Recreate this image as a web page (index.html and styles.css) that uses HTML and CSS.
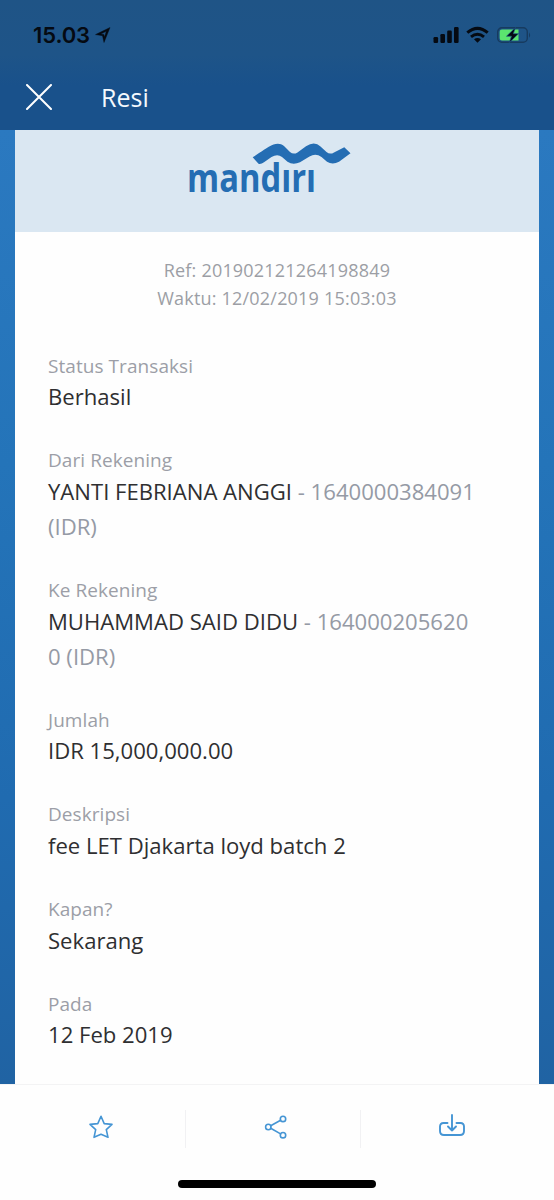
FILE: index.html
```html
<!DOCTYPE html>
<html lang="id">
<head>
<meta charset="utf-8">
<title>Resi</title>
<link rel="stylesheet" href="styles.css">
</head>
<body>
<header class="header">
  <div class="status">
    <span class="clock">15.03</span>
    <svg class="loc" width="16" height="16" viewBox="0 0 16 16"><path d="M15 .5.5 7.600 7.500 8.700 9 15.500zM11.300 4.300 5.800 7.100 8.900 7.500 9.500 10z" fill="#050a12" stroke="#050a12" stroke-width=".4" fill-rule="evenodd"/></svg>
    <svg class="indicators" width="98" height="18" viewBox="0 0 98 18">
      <g fill="#050a12">
        <rect x="0.500" y="11" width="4.600" height="6" rx="1.200"/>
        <rect x="7.400" y="8" width="4.600" height="9" rx="1.200"/>
        <rect x="14.200" y="4.500" width="4.600" height="12.500" rx="1.200"/>
        <rect x="21" y="1" width="4.600" height="16" rx="1.200"/>
        <path d="M41 13.200q3.500-2.300 7 0L44.500 16.800z"/>
      </g>
      <g fill="none" stroke="#050a12" stroke-width="3">
        <path d="M34.300 6.700q10.200-8.600 20.400 0"/>
        <path d="M38 10.900q6.500-5.200 13 0"/>
      </g>
      <rect x="64.700" y="1.700" width="29.600" height="14.600" rx="4.200" fill="none" stroke="#173b5f" stroke-width="1.400"/>
      <path d="M96 6.200q2.200 2.800 0 5.600z" fill="#173b5f"/>
      <path d="M69 3.500h16.500v11H69q-2.300 0-2.300-2.300V5.800q0-2.300 2.300-2.300z" fill="#5be56f"/>
      <path d="M82.500 1.500 73.500 10.200h5l-2.300 6.500 9.300-9h-5.200z" fill="#050a12" stroke="#1c5386" stroke-width=".7"/>
    </svg>
  </div>
  <div class="nav">
    <svg class="close" width="26" height="26" viewBox="0 0 26 26"><path d="M1 1 25 25M25 1 1 25" stroke="#fff" stroke-width="2" stroke-linecap="round"/></svg>
    <h1 class="title">Resi</h1>
  </div>
</header>

<main class="stage">
  <article class="receipt">
    <div class="brand">
      <div class="logo">
        <svg class="ribbon" width="100" height="24" viewBox="0 0 100 24"><path d="M.7 14.300C8 10 15 4 21.500 1.600 25 .3 29 .4 32 3L38 9Q41.500 12 45.500 9.400L54 3.300Q62.500-2.200 68.500 3.500L74.500 9Q78 12 82 9.400L92.300 4.300 98.500 10.300 87 18.800Q80.500 22.300 75 18.800L69.500 14Q63.500 9.500 57.500 13.600L48 19.300Q41 22.300 35.500 18.800L30 14Q25.500 10.500 19.500 14L12 19.300Q9 21.500 6.500 20.800z" fill="#246db3"/></svg>
        <span class="wordmark">mandırı</span>
      </div>
    </div>
    <div class="meta">
      <div class="ref">Ref: 201902121264198849</div>
      <div class="time">Waktu: 12/02/2019 15:03:03</div>
    </div>
    <dl class="details">
      <div class="row"><dt>Status Transaksi</dt><dd>Berhasil</dd></div>
      <div class="row"><dt>Dari Rekening</dt><dd>YANTI FEBRIANA ANGGI <span class="account">- 1640000384091<br>(IDR)</span></dd></div>
      <div class="row"><dt>Ke Rekening</dt><dd>MUHAMMAD SAID DIDU <span class="account">- 164000205620<br>0 (IDR)</span></dd></div>
      <div class="row"><dt>Jumlah</dt><dd>IDR 15,000,000.00</dd></div>
      <div class="row"><dt>Deskripsi</dt><dd>fee LET Djakarta loyd batch 2</dd></div>
      <div class="row"><dt>Kapan?</dt><dd>Sekarang</dd></div>
      <div class="row"><dt>Pada</dt><dd>12 Feb 2019</dd></div>
    </dl>
  </article>
</main>

<footer class="footer">
  <div class="actions">
    <div class="action"><svg class="star" width="26" height="26" viewBox="0 0 26 26"><path d="M13 2.300 16.200 9.600 24 10.400 18.300 15.700 20 23.300 13 20.300 6 23.300 7.700 15.700 2 10.400 9.800 9.600z"/></svg></div>
    <div class="action"><svg class="share" width="26" height="26" viewBox="0 0 26 26"><circle cx="5.300" cy="13" r="2.700"/><circle cx="20" cy="4.900" r="2.700"/><circle cx="20" cy="21.200" r="2.700"/><path d="M7.700 11.700 17.600 6.200M7.700 14.300l9.900 5.600"/></svg></div>
    <div class="action"><svg class="save" width="28" height="26" viewBox="0 0 28 26"><path d="M9.500 10H5.500Q2 10 2 13.500v4.500q0 4 4 4h16q4 0 4-4v-4.500q0-3.500-3.500-3.500h-4M14 2v15.500M10 13.500l4 4 4-4"/></svg></div>
  </div>
  <div class="home"></div>
</footer>
</body>
</html>
```
FILE: styles.css
```css
* { box-sizing: border-box; }
body {
  margin: 0;
  width: 554px;
  height: 1200px;
  display: flex;
  flex-direction: column;
  overflow: hidden;
  font-family: "Open Sans", "Noto Sans", sans-serif;
  background: #fefefe;
}
.header {
  flex: none;
  height: 130px;
  background: linear-gradient(#1f5486 0, #1e5488 55px, #19518b 85px, #19518b 100%);
}
.status { display: flex; align-items: center; height: 68px; padding: 1px 23px 0 33px; }
.clock {
  font: 600 22px/30px Inter, sans-serif;
  color: #050a12;
  width: 58px;
  letter-spacing: -0.1px;
}
.loc { margin-left: 4px; }
.indicators { margin-left: auto; }
.nav { display: flex; align-items: center; height: 58px; padding-left: 26px; }
.title { margin: 0 0 0 49px; font-size: 25px; line-height: 34px; font-weight: 400; color: #f4f9fe; }
.stage {
  flex: none;
  height: 954px;
  padding: 0 15px;
  background: linear-gradient(#2b79c0, #2474b9 35%, #206bb0 70%, #2063a3);
}
.receipt { height: 954px; background: #fefefe; }
.brand { height: 102px; display: flex; justify-content: center; background: #dae7f2; }
.logo { position: relative; width: 178px; height: 80px; }
.ribbon { position: absolute; left: 64px; top: 13px; }
.wordmark {
  display: block;
  margin-top: 24px;
  margin-left: -1px;
  font-weight: 700;
  font-size: 39px;
  line-height: 46px;
  color: #246db3;
  transform-origin: 0 0;
  transform: scaleX(.84);
}
.meta {
  padding: 24px 0 0;
  text-align: center;
  font-size: 18px;
  line-height: 28px;
  color: #9c9ea5;
}
.ref, .time { letter-spacing: .2px; }
.details { margin: 40.5px 33px 0; display: flex; flex-direction: column; gap: 32.7px; }
dt { font-size: 19px; line-height: 26.6px; color: #9c9ea7; letter-spacing: .06px; }
dd { margin: 0; font-size: 22.1px; line-height: 35.3px; color: #2f2f31; white-space: nowrap; }
.account { color: #959aa5; }
.footer { flex: none; height: 116px; border-top: 1px solid #f3f3f4; background: #fefefe; }
.actions { display: grid; grid-template-columns: 170px 175px 184px; height: 84px; padding: 4px 10px 0 15px; align-content: center; }
.action {
  height: 38px;
  display: flex;
  align-items: center;
  justify-content: center;
}
.action + .action { border-left: 1px solid #f1f1f3; }
.action svg { fill: none; stroke: #4595d4; stroke-width: 1.6; stroke-linecap: round; stroke-linejoin: round; }
.action .star { margin: -4px 0 0 1px; }
.action .share { margin: -4px 0 0 5px; }
.action .save { margin: -7px 2px 0 0; stroke-width: 1.9; }
.home { width: 198px; height: 8px; margin: 11px auto 0; border-radius: 4px; background: #000; }
```
